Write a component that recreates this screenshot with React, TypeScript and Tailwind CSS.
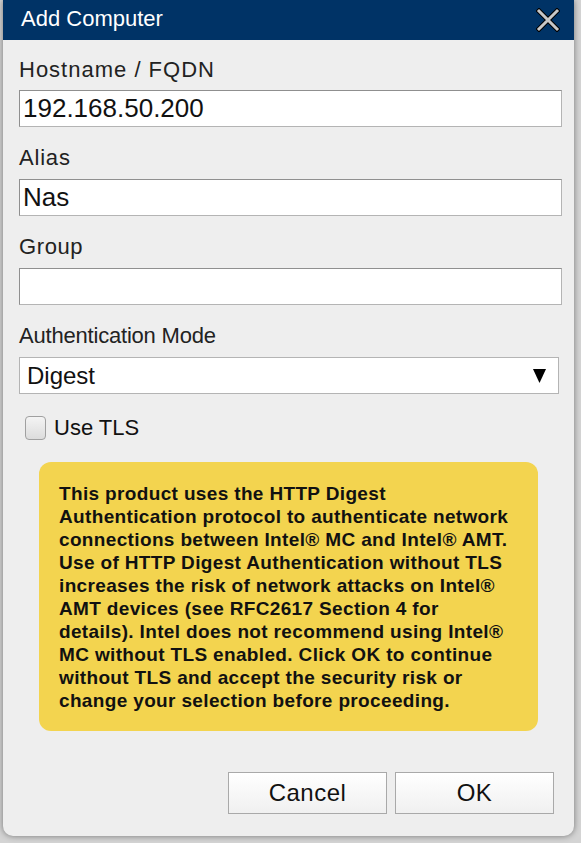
import React from "react";

const inputCls =
  "block w-[543px] h-[37px] bg-white border border-[#b4b4b4] border-t-[#8f8f8f] border-l-[#8f8f8f] px-[3px] text-[26px] leading-none text-[#111] outline-none";

export default function App() {
  return (
    <div
      className="w-[581px] h-[843px] bg-[#d4d4d4] overflow-hidden"
      style={{ fontFamily: '"Liberation Sans", Arial, sans-serif' }}
    >
      <div className="ml-[3px] w-[571px] h-[836px] bg-[#eeeeee] rounded-b-[10px] shadow-[0_0_6px_rgba(0,0,0,0.45)] flex flex-col">
        <div className="h-[40px] bg-[#003366] flex items-center justify-between pl-[18px] pr-[14px] pb-[4px]">
          <span className="text-white text-[22px]">Add Computer</span>
          <svg width="24" height="24" viewBox="0 0 24 24" className="mt-[3px]">
            <path d="M3 3 L21 21 M21 3 L3 21" stroke="#000" strokeWidth="5" strokeLinecap="square" />
            <path d="M3 3 L21 21 M21 3 L3 21" stroke="#c8c8c8" strokeWidth="3" strokeLinecap="square" />
          </svg>
        </div>
        <div className="pl-[16px] pt-[17px] flex flex-col">
          <label className="text-[22px] leading-[26px] text-[#222] tracking-[1px]">Hostname / FQDN</label>
          <input className={inputCls + " mt-[7px]"} defaultValue="192.168.50.200" />
          <label className="text-[22px] leading-[26px] text-[#222] mt-[18px] tracking-[0.8px]">Alias</label>
          <input className={inputCls + " mt-[8px]"} defaultValue="Nas" />
          <label className="text-[22px] leading-[26px] text-[#222] mt-[18px] tracking-[0.6px]">Group</label>
          <input className={inputCls + " mt-[8px]"} defaultValue="" />
          <label className="text-[22px] leading-[26px] text-[#222] mt-[18px] tracking-[-0.2px]">Authentication Mode</label>
          <div className="mt-[8px] w-[540px] h-[37px] bg-white border border-[#b4b4b4] flex items-center justify-between pl-[7px] pr-[12px]">
            <span className="text-[24px] text-[#111]">Digest</span>
            <svg width="13" height="14" viewBox="0 0 13 14">
              <path d="M0 0 H13 L6.5 14 Z" fill="#000" />
            </svg>
          </div>
          <div className="flex items-center mt-[17px] ml-[6px]">
            <div className="w-[21px] h-[24px] rounded-[4px] border border-[#a0a0a0] bg-gradient-to-b from-[#f4f4f4] to-[#dcdcdc]" />
            <span className="ml-[8px] text-[22px] text-[#111]">Use TLS</span>
          </div>
          <div className="mt-[18px] ml-[20px] w-[499px] h-[269px] rounded-[12px] bg-[#f3d44f] pl-[20px] pr-[21px] pt-[20px]">
            <p className="text-[19px] leading-[23px] font-bold text-[#111] tracking-[0.35px]">
              This product uses the HTTP Digest Authentication protocol to authenticate network connections
              between Intel® MC and Intel® AMT. Use of HTTP Digest Authentication without TLS increases the
              risk of network attacks on Intel® AMT devices (see RFC2617 Section 4 for details). Intel does
              not recommend using Intel® MC without TLS enabled. Click OK to continue without TLS and
              accept the security risk or change your selection before proceeding.
            </p>
          </div>
          <div className="flex justify-end gap-[8px] mt-[41px] pr-[20px]">
            <button className="w-[159px] h-[42px] bg-gradient-to-b from-white to-[#f0f0f0] border border-[#a9a9a9] text-[24px] text-[#111] tracking-[0.5px]">
              Cancel
            </button>
            <button className="w-[159px] h-[42px] bg-gradient-to-b from-white to-[#f0f0f0] border border-[#a9a9a9] text-[24px] text-[#111] tracking-[0.5px]">
              OK
            </button>
          </div>
        </div>
      </div>
    </div>
  );
}
